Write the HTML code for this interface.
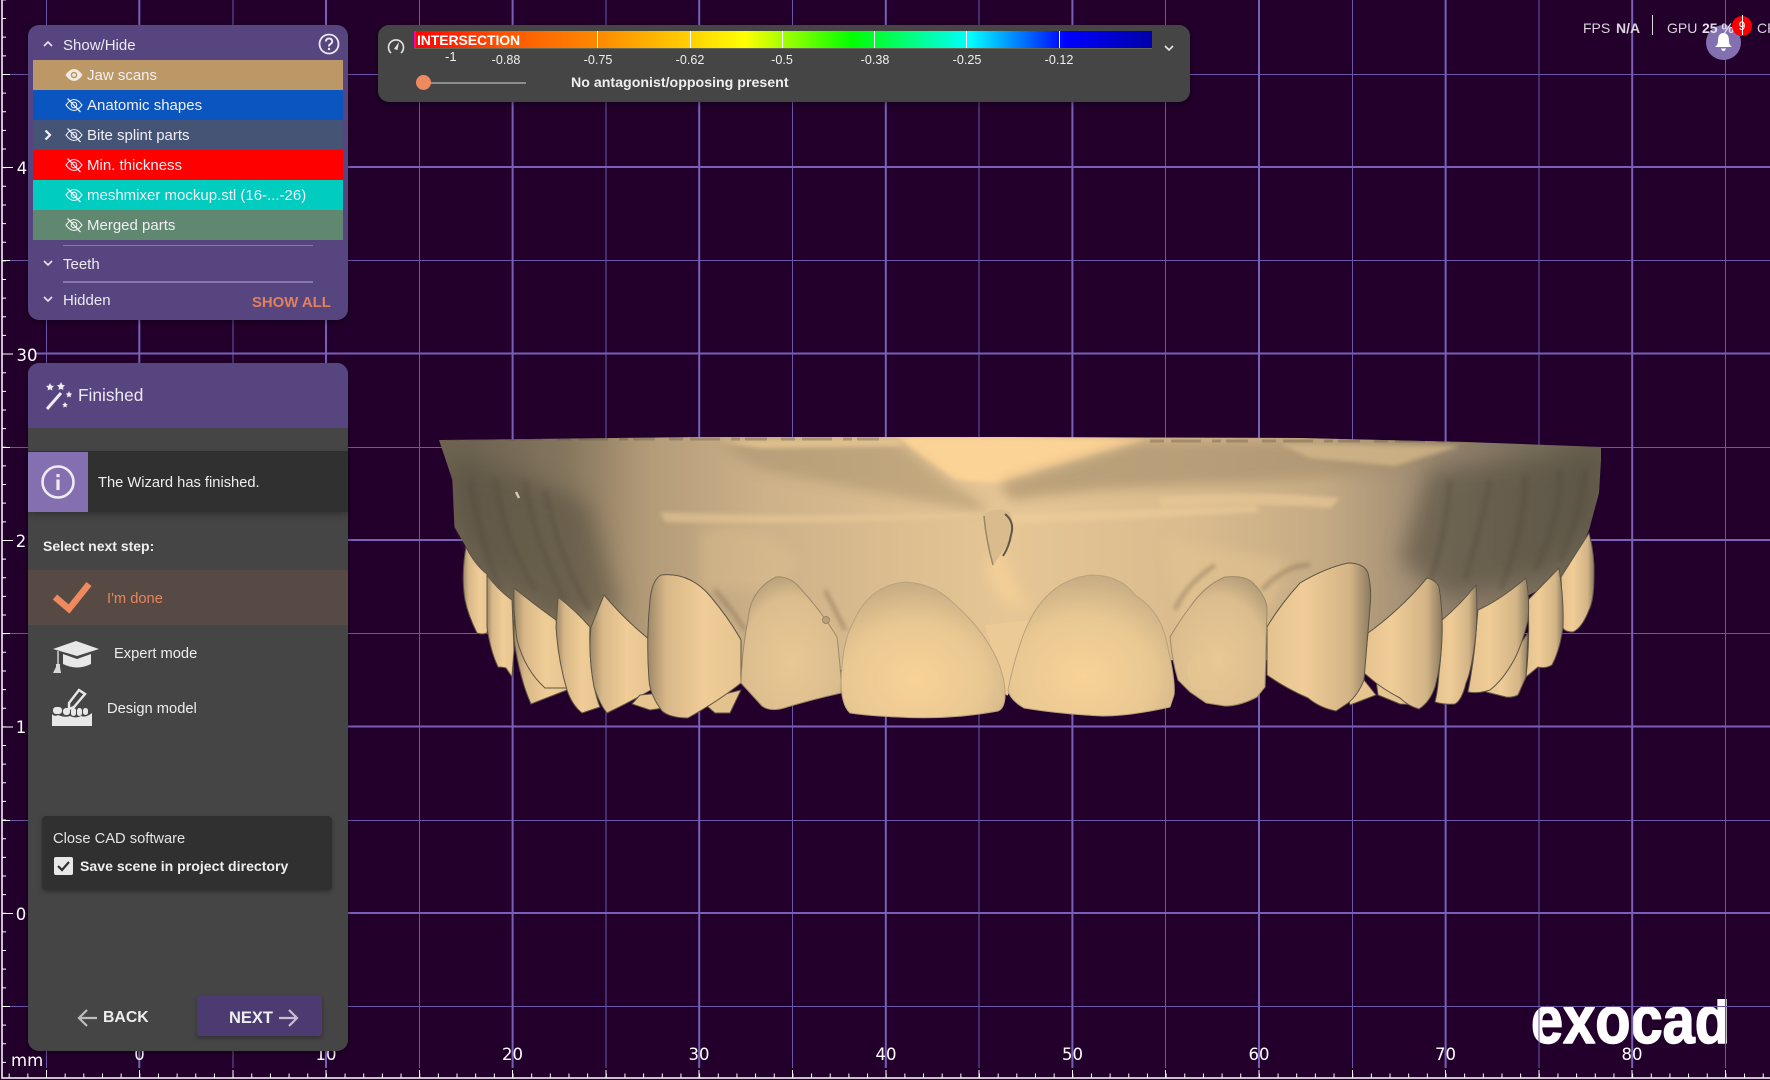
<!DOCTYPE html>
<html><head><meta charset="utf-8"><style>
html,body{margin:0;padding:0;background:#22002b;width:1770px;height:1080px;overflow:hidden}
body{position:relative;font-family:"Liberation Sans",sans-serif;color:#eee}
.a{position:absolute;white-space:nowrap}
.t{position:absolute;white-space:nowrap;line-height:20px;height:20px}
.panel{position:absolute;box-shadow:0 2px 6px rgba(0,0,0,.35)}
.row{position:absolute;left:5px;width:310px;height:30px}
.row span{position:absolute;left:54px;top:1px;line-height:30px;font-size:15px;color:#f1eef4;white-space:nowrap}
.row svg{position:absolute;left:32px;top:6px}
svg{display:block}
</style></head><body>
<svg class="a" style="left:0;top:0" width="1770" height="1080" viewBox="0 0 1770 1080" font-family="'DejaVu Sans',sans-serif">
<defs>
<linearGradient id="gum" gradientUnits="userSpaceOnUse" x1="439" y1="0" x2="1601" y2="0">
<stop offset="0" stop-color="#6e6350"/><stop offset=".03" stop-color="#6f6453"/><stop offset=".11" stop-color="#85765d"/><stop offset=".18" stop-color="#b39b78"/><stop offset=".28" stop-color="#cdb189"/><stop offset=".4" stop-color="#dcbe90"/><stop offset=".49" stop-color="#e6c695"/><stop offset=".65" stop-color="#d9bb8e"/><stop offset=".76" stop-color="#c5ab84"/><stop offset=".86" stop-color="#978670"/><stop offset=".93" stop-color="#7d715e"/><stop offset="1" stop-color="#66604f"/>
</linearGradient>
<linearGradient id="gL" x1="0" y1="0" x2="1" y2="0"><stop offset="0" stop-color="#9d8868"/><stop offset=".2" stop-color="#d8b888"/><stop offset=".6" stop-color="#f0cd97"/><stop offset="1" stop-color="#e6c490"/></linearGradient>
<linearGradient id="gR" x1="1" y1="0" x2="0" y2="0"><stop offset="0" stop-color="#8a7a60"/><stop offset=".2" stop-color="#d3b486"/><stop offset=".65" stop-color="#f0cd97"/><stop offset="1" stop-color="#e4c28f"/></linearGradient>
<radialGradient id="gC" cx=".45" cy=".72" r=".7"><stop offset="0" stop-color="#f8d297"/><stop offset=".6" stop-color="#e9c892"/><stop offset="1" stop-color="#c9ae85"/></radialGradient>
<radialGradient id="gM" cx=".5" cy=".65" r=".7"><stop offset="0" stop-color="#e8c893"/><stop offset=".7" stop-color="#dcbd8e"/><stop offset="1" stop-color="#b39c78"/></radialGradient>
<filter id="b6" x="-30%" y="-30%" width="160%" height="160%"><feGaussianBlur stdDeviation="6"/></filter>
<filter id="b2" x="-30%" y="-30%" width="160%" height="160%"><feGaussianBlur stdDeviation="2"/></filter>
<filter id="b10" x="-30%" y="-30%" width="160%" height="160%"><feGaussianBlur stdDeviation="11"/></filter>
<clipPath id="sil"><path d="M439 440L700 437L1000 437L1300 438L1466 442L1601 447L1601 460L1599 493L1589 530L1570 572L1450 640L1267 660L1176 660L1005 670L841 670L741 665L650 660L500 640L466 560L454 527L452 480Z"/></clipPath>
<clipPath id="logoclip"><rect x="1520" y="999" width="220" height="60"/></clipPath>
</defs>
<!-- logo under grid -->
<text x="1531" y="1043" font-family="'Liberation Sans',sans-serif" font-weight="bold" font-size="67" fill="#fff" stroke="#fff" stroke-width="1.6" stroke-linejoin="round" textLength="199" lengthAdjust="spacingAndGlyphs" clip-path="url(#logoclip)">exocad</text>
<!-- grid -->
<g stroke="#6b57a8" stroke-width="1">
<path d="M46.5 0V1068M233 0V1068M419.5 0V1068M606 0V1068M792.5 0V1068M979 0V1068M1165.5 0V1068M1352.5 0V1068M1539 0V1068M1725.5 0V1068"/>
<path d="M10 74.5H1770M10 260.5H1770M10 447.5H1770M10 633.5H1770M10 820.5H1770M10 1006.5H1770"/>
</g>
<g stroke="#7860b8" stroke-width="2">
<path d="M139.3 0V1068M326 0V1068M512.6 0V1068M699.2 0V1068M885.8 0V1068M1072.4 0V1068M1259 0V1068M1445.6 0V1068M1632.2 0V1068"/>
<path d="M36 167H1770M36 353.5H1770M36 540H1770M36 726.5H1770M36 913H1770"/>
</g>
<!-- ruler -->
<g stroke="#fff" fill="none">
<path d="M2 0V1078H1770" stroke-width="1.5"/>
<line x1="4" y1="0" x2="4" y2="1080" stroke-width="4" stroke-dasharray="1 17.64" stroke-dashoffset="0.6"/>
<line x1="0" y1="1075.5" x2="1770" y2="1075.5" stroke-width="4" stroke-dasharray="1 17.66" stroke-dashoffset="9.98"/>
<path d="M2 74.5H10M2 260.5H10M2 447.5H10M2 633.5H10M2 820.5H10M2 1006.5H10M2 167.5H13M2 354H13M2 540.5H13M2 727H13M2 913.5H13" stroke-width="1"/>
<path d="M46.5 1070V1078M139.5 1070V1078M233 1070V1078M326 1070V1078M419.5 1070V1078M512.5 1070V1078M606 1070V1078M699 1070V1078M792.5 1070V1078M886 1070V1078M979 1070V1078M1072.5 1070V1078M1165.5 1070V1078M1259 1070V1078M1352.5 1070V1078M1445.5 1070V1078M1539 1070V1078M1632 1070V1078M1725.5 1070V1078" stroke-width="1"/>
</g>
<g fill="#fff" font-size="16.5">
<text x="22" y="174" text-anchor="middle">4</text><text x="27" y="361" text-anchor="middle">30</text><text x="21" y="547" text-anchor="middle">2</text><text x="21" y="733" text-anchor="middle">1</text><text x="21" y="920" text-anchor="middle">0</text>
<text x="139.5" y="1060" text-anchor="middle">0</text><text x="326" y="1060" text-anchor="middle">10</text><text x="512.5" y="1060" text-anchor="middle">20</text><text x="699" y="1060" text-anchor="middle">30</text><text x="886" y="1060" text-anchor="middle">40</text><text x="1072.5" y="1060" text-anchor="middle">50</text><text x="1259" y="1060" text-anchor="middle">60</text><text x="1445.5" y="1060" text-anchor="middle">70</text><text x="1632" y="1060" text-anchor="middle">80</text>
<text x="11" y="1066">mm</text>
</g>
<!-- model: gum -->
<path fill="url(#gum)" d="M439 440L700 437L1000 437L1300 438L1466 442L1601 447L1601 460L1599 493L1589 530L1570 572L1450 640L1267 660L1176 660L1005 670L841 670L741 665L650 660L500 640L466 547L454.5 527L452.5 480Z"/>
<g clip-path="url(#sil)">
<path d="M895 437L955 480L1000 483L1050 468L1146 440Z" fill="#fcd396" filter="url(#b2)"/>
<path d="M1000 483L1050 468L1146 440L1466 442L1400 472L1250 482L1100 490L1010 500Z" fill="#a68f6d" opacity=".65" filter="url(#b6)"/>
<path d="M1280 444L1460 446L1395 466L1310 458Z" fill="#d9bb8d" opacity=".7" filter="url(#b2)"/>
<path d="M1160 497Q1250 490 1340 498L1330 508Q1250 502 1160 508Z" fill="#e8c795" opacity=".7" filter="url(#b2)"/>
<path d="M720 445L895 440L945 480L985 505L985 512L860 490L760 470Z" fill="#a08a69" opacity=".45" filter="url(#b6)"/>
<path d="M720 441L895 438L905 446L760 448Z" fill="#e6c692" opacity=".8" filter="url(#b2)"/>
<path d="M660 512Q800 518 980 513L985 516Q800 526 665 522Z" fill="#efcf9c" opacity=".5" filter="url(#b2)"/>
<path d="M1005 515Q1120 510 1255 505L1260 512Q1120 520 1010 524Z" fill="#f0cf9b" opacity=".55" filter="url(#b2)"/>
<path d="M445 460Q500 460 590 505L620 610L560 620L490 575L455 520Z" fill="#57503f" opacity=".55" filter="url(#b10)"/>
<path d="M1430 470L1600 450L1595 520L1550 570L1450 600L1400 560Z" fill="#57503f" opacity=".6" filter="url(#b10)"/>
<path d="M1000 540Q1010 580 1030 610L1000 600L985 570Z" fill="#f8d397" opacity=".7" filter="url(#b6)"/>
<path d="M1165 540L1285 560L1270 610L1180 620Z" fill="#e4c592" opacity=".55" filter="url(#b6)"/>
<path d="M700 530Q760 520 800 560L780 590L700 590Z" fill="#e0c18f" opacity=".4" filter="url(#b6)"/>
<path d="M470 480Q480 540 500 590M495 480Q505 540 535 590M525 480Q530 530 565 600M545 490Q560 560 590 610M1450 480Q1445 540 1430 580M1490 480Q1480 530 1465 580M1525 475Q1525 530 1500 590M1560 470Q1560 520 1535 570M1585 470Q1580 520 1560 560" stroke="#4d4738" stroke-width="5" fill="none" opacity=".28" filter="url(#b2)"/>
<path d="M516 492L519 498" stroke="#f7e3bc" stroke-width="2.5" opacity=".8"/>
<path d="M445 439H890M1150 441H1600" stroke="#544c3c" stroke-width="3" stroke-dasharray="14 7 30 11 9 5 22 14" opacity=".32"/>
<path d="M715 590Q732 610 745 630M1262 590Q1285 565 1310 565M1175 610Q1185 585 1215 565M825 590Q835 610 845 630" stroke="#8a7557" stroke-width="4" fill="none" opacity=".55" filter="url(#b2)"/>
</g>
<!-- frenulum -->
<path d="M983 515Q986 545 993 565Q1002 552 1012 540Q1014 522 1010 512Q996 506 983 515Z" fill="#d9bb8d"/>
<path d="M1005 514Q1015 522 1011 535Q1009 547 1003 556" stroke="#5f5644" stroke-width="2" fill="none"/>
<path d="M984 516Q986 540 993 565" stroke="#9c8668" stroke-width="1.5" fill="none"/>
<!-- teeth -->
<g stroke="#5d5443" stroke-width="1" stroke-linejoin="round">
<path fill="url(#gL)" d="M466 547Q475 565 487 574L491 610L487 633Q482 635 477 633Q468 615 465 600Q461 575 466 547Z"/>
<path fill="url(#gL)" d="M487 575Q498 590 512 600L514 650L512 677L506 668Q502 667 498 667Q490 650 487 627Z"/>
<path fill="url(#gL)" d="M514 640Q520 680 531 704L567 690L570 680L540 668Q522 650 514 620Z"/>
<path fill="url(#gL)" d="M514 588Q535 605 556 620L563 660L567 688L545 688Q525 670 517 640Q513 610 514 588Z"/>
<path fill="url(#gL)" d="M558 597Q575 610 590 627Q589 650 592 673Q595 695 600 707L582 713Q572 705 567 690Q558 660 556 627Z"/>
<path fill="url(#gL)" d="M604 595Q625 620 650 640L651 690Q630 702 607 713Q600 705 594 687Q588 655 591 627Q598 610 604 595Z"/>
<path fill="#e6c591" d="M640 695L660 693L664 708L650 710L632 704Z"/>
<path fill="#e3c28e" d="M741 690L730 713L715 713L700 700Z"/>
<path fill="url(#gR)" d="M1528 633L1526 677L1518 695Q1512 698 1506 697L1486 692Z"/>
<path fill="#e6c591" d="M1364 680L1376 695L1350 705L1348 695Z"/>
<path fill="#e6c591" d="M1376 680L1420 705L1400 704L1378 695Z"/>
<path fill="url(#gR)" d="M1589 533Q1595 555 1594 577Q1594 600 1589 610Q1582 628 1573 632Q1565 632 1563 628L1561 577Z"/>
<path fill="url(#gR)" d="M1559 568Q1564 600 1563 627Q1560 650 1552 665Q1545 669 1538 667L1526 677Q1530 640 1528 600Z"/>
<path fill="url(#gR)" d="M1526 578Q1530 600 1528 620Q1522 645 1514 660Q1503 680 1490 690Q1478 694 1468 692Q1474 660 1476 633Q1477 620 1478 610Q1500 600 1526 578Z"/>
<path fill="url(#gR)" d="M1476 585Q1478 610 1476 633Q1472 670 1466 683Q1462 700 1455 704Q1445 705 1435 702Q1438 690 1439 673Q1442 650 1442 620Q1460 605 1476 585Z"/>
<path fill="url(#gR)" d="M1427 578Q1436 580 1439 587Q1443 610 1442 637Q1441 665 1435 687Q1430 702 1419 709Q1408 706 1400 698Q1385 690 1376 683L1364 673Q1366 650 1368 633Q1400 610 1427 578Z"/>
<path fill="url(#gR)" d="M1348 563Q1364 563 1368 573Q1372 590 1370 607L1364 680Q1358 695 1348 703L1336 711Q1320 708 1308 698Q1285 688 1267 675L1267 627Q1280 605 1300 583Q1325 568 1348 563Z"/>
<path fill="url(#gM)" stroke="#a08a68" d="M1225 577Q1245 575 1253 583Q1265 595 1267 607L1265 687L1257 697Q1240 706 1225 706L1206 703L1190 692L1178 680Q1172 660 1170 637Q1180 620 1190 607Q1205 585 1225 577Z"/>
<path fill="url(#gL)" d="M661 575Q690 572 711 597Q730 620 741 640L741 683Q720 700 688 718Q670 718 662 711Q650 695 649 680Q646 640 650 600Q652 580 661 575Z"/>
<path fill="url(#gM)" stroke="#a08a68" d="M776 577Q790 576 800 588Q822 612 837 637Q842 680 841 693Q810 700 784 708Q770 712 762 706L741 683Q742 650 748 620Q750 590 776 577Z"/>
<path fill="#ecca95" stroke="none" d="M985 625L1030 620L1012 680L1008 695Q1006 697 1004 690Z"/>
<path fill="url(#gC)" stroke="#b9a27d" d="M906 582Q933 584 950 600Q975 622 986 640Q1003 665 1005 690Q1006 708 998 711Q950 720 898 717Q870 716 850 713Q841 705 841 680Q843 640 852 625Q868 585 906 582Z"/>
<path fill="url(#gC)" stroke="#b9a27d" d="M1091 575Q1120 575 1135 595Q1158 610 1165 635Q1176 680 1174 695L1170 707Q1130 716 1103 716Q1060 714 1024 708Q1010 700 1008 690Q1014 660 1024 633Q1045 580 1091 575Z"/>
</g>
<path d="M1195 655Q1205 650 1214 660L1220 690L1195 690Q1180 670 1195 655Z" fill="#e6c693" opacity=".7"/>
<circle cx="826" cy="620" r="3.5" fill="#b8a07c" stroke="#9a8565"/>
</svg>

<!-- Top right stats -->
<div class="a" style="left:1706px;top:25px;width:35px;height:35px;border-radius:50%;background:#8370b0"></div>
<svg class="a" style="left:1714px;top:31px" width="19" height="22" viewBox="0 0 19 22"><path d="M9.5 2C14 2 15 6 15 10Q15 14 18 16H1Q4 14 4 10C4 6 5 2 9.5 2ZM7 17.5H12Q11 20 9.5 20T7 17.5Z" fill="#fff"/></svg>
<div class="t" style="left:1583px;top:18px;font-size:14px;color:#d8d5dc">FPS</div>
<div class="t" style="left:1616px;top:18px;font-size:14px;font-weight:bold;color:#d8d5dc">N/A</div>
<div class="a" style="left:1652px;top:15px;width:1px;height:20px;background:#ddd"></div>
<div class="t" style="left:1667px;top:18px;font-size:14px;color:#d8d5dc">GPU</div>
<div class="t" style="left:1702px;top:18px;font-size:14px;font-weight:bold;color:#e4e1e8">25 %</div>
<div class="t" style="left:1757px;top:18px;font-size:14px;color:#d8d5dc">CPU</div>
<div class="a" style="left:1732px;top:16px;width:20px;height:20px;border-radius:50%;background:#fb0000;color:#fff;font-size:12px;line-height:20px;text-align:center">9</div>
<div class="a" style="left:1742px;top:15px;width:1px;height:20px;background:#fff"></div>

<!-- Show/Hide panel -->
<div class="panel" style="left:28px;top:25px;width:320px;height:295px;border-radius:11px;background:#57457f">
<svg class="a" style="left:15px;top:15px" width="10" height="8" viewBox="0 0 10 8"><path d="M1 6L5 2L9 6" stroke="#e8e4f0" stroke-width="1.6" fill="none"/></svg>
<div class="t" style="left:35px;top:11px;font-size:15px;color:#eceaf1">Show/Hide</div>
<svg class="a" style="left:290px;top:8px" width="22" height="22" viewBox="0 0 22 22"><circle cx="11" cy="11" r="9.5" stroke="#ebe8f2" stroke-width="1.8" fill="none"/><path d="M7.8 8.5Q8 5.5 11 5.5T14.2 8.3Q14.2 10 12.5 11T11 13.5" stroke="#ebe8f2" stroke-width="1.9" fill="none"/><circle cx="11" cy="16" r="1.2" fill="#ebe8f2"/></svg>
<div class="row" style="top:35px;background:#bc9866"><svg width="18" height="18" viewBox="0 0 18 18"><path d="M0.5 9Q4.5 3 9 3T17.5 9Q13.5 15 9 15T0.5 9Z" fill="#f0ece4"/><circle cx="9" cy="9" r="3.3" fill="#bc9866"/><circle cx="9" cy="9" r="1.8" fill="#f0ece4"/></svg><span>Jaw scans</span></div>
<div class="row" style="top:65px;background:#0a55bf"><svg width="18" height="18" viewBox="0 0 18 18" fill="none" stroke="#e6ecf5" stroke-width="1.1"><path d="M1 9Q5 3.5 9 3.5T17 9Q13 14.5 9 14.5T1 9Z"/><circle cx="9" cy="9" r="2.8"/><path d="M2.5 2.5L15.5 16" stroke-width="1.3"/></svg><span>Anatomic shapes</span></div>
<div class="row" style="top:95px;background:#455475"><svg width="18" height="18" viewBox="0 0 18 18" fill="none" stroke="#e6ecf5" stroke-width="1.1"><path d="M1 9Q5 3.5 9 3.5T17 9Q13 14.5 9 14.5T1 9Z"/><circle cx="9" cy="9" r="2.8"/><path d="M2.5 2.5L15.5 16" stroke-width="1.3"/></svg><svg style="left:10px;top:9px" width="10" height="12" viewBox="0 0 10 12"><path d="M2.5 1.5L7 6L2.5 10.5" stroke="#eef" stroke-width="2.2" fill="none"/></svg><span>Bite splint parts</span></div>
<div class="row" style="top:125px;background:#ff0000"><svg width="18" height="18" viewBox="0 0 18 18" fill="none" stroke="#fde" stroke-width="1.1"><path d="M1 9Q5 3.5 9 3.5T17 9Q13 14.5 9 14.5T1 9Z"/><circle cx="9" cy="9" r="2.8"/><path d="M2.5 2.5L15.5 16" stroke-width="1.3"/></svg><span>Min. thickness</span></div>
<div class="row" style="top:155px;background:#00ccc0"><svg width="18" height="18" viewBox="0 0 18 18" fill="none" stroke="#e6fafa" stroke-width="1.1"><path d="M1 9Q5 3.5 9 3.5T17 9Q13 14.5 9 14.5T1 9Z"/><circle cx="9" cy="9" r="2.8"/><path d="M2.5 2.5L15.5 16" stroke-width="1.3"/></svg><span>meshmixer mockup.stl (16-...-26)</span></div>
<div class="row" style="top:185px;background:#60876f"><svg width="18" height="18" viewBox="0 0 18 18" fill="none" stroke="#eaf0ec" stroke-width="1.1"><path d="M1 9Q5 3.5 9 3.5T17 9Q13 14.5 9 14.5T1 9Z"/><circle cx="9" cy="9" r="2.8"/><path d="M2.5 2.5L15.5 16" stroke-width="1.3"/></svg><span>Merged parts</span></div>
<div class="a" style="left:35px;top:220px;width:250px;height:1px;background:#8877aa"></div>
<svg class="a" style="left:15px;top:234px" width="10" height="8" viewBox="0 0 10 8"><path d="M1 2L5 6L9 2" stroke="#e8e4f0" stroke-width="1.6" fill="none"/></svg>
<div class="t" style="left:35px;top:230px;font-size:15px;color:#eceaf1">Teeth</div>
<div class="a" style="left:35px;top:256px;width:250px;height:2px;background:#8877aa"></div>
<svg class="a" style="left:15px;top:270px" width="10" height="8" viewBox="0 0 10 8"><path d="M1 2L5 6L9 2" stroke="#e8e4f0" stroke-width="1.6" fill="none"/></svg>
<div class="t" style="left:35px;top:266px;font-size:15px;color:#eceaf1">Hidden</div>
<div class="t" style="left:224px;top:268px;font-size:14.9px;font-weight:bold;color:#e0815b">SHOW ALL</div>
</div>

<!-- Color scale panel -->
<div class="panel" style="left:378px;top:25px;width:812px;height:77px;border-radius:11px;background:#454545">
<svg class="a" style="left:8px;top:12px" width="20" height="18" viewBox="0 0 20 18"><path d="M5 16A7.5 7.5 0 1 1 15 16" stroke="#e4e4e4" stroke-width="1.6" fill="none"/><path d="M8 12L13 5L11.5 13Z" fill="#e4e4e4"/></svg>
<div class="a" style="left:36px;top:6px;width:738px;height:17px;background:linear-gradient(90deg,#ff0000 0,#ff5500 90px,#ff8800 183px,#ffc400 260px,#ffff00 331px,#00ff00 438px,#00ffff 556px,#0000ff 652px,#0000aa 738px);border-bottom:1px solid #665"></div>
<div class="a" style="left:36px;top:6px;width:2px;height:17px;background:#f0a"></div>
<div class="a" style="left:219px;top:6px;width:1px;height:17px;background:#fff"></div>
<div class="a" style="left:312px;top:6px;width:1px;height:17px;background:#fff"></div>
<div class="a" style="left:404px;top:6px;width:1px;height:17px;background:#fff"></div>
<div class="a" style="left:496px;top:6px;width:1px;height:17px;background:#fff"></div>
<div class="a" style="left:588px;top:6px;width:1px;height:17px;background:#fff"></div>
<div class="a" style="left:681px;top:6px;width:1px;height:17px;background:#fff"></div>
<div class="t" style="left:39px;top:5px;font-size:14px;font-weight:bold;color:#fff;letter-spacing:-.1px">INTERSECTION</div>
<div class="t" style="left:67px;top:22px;font-size:13px;color:#eee">-1</div>
<div class="t" style="left:108px;top:25px;font-size:12.6px;width:40px;text-align:center;color:#eee">-0.88</div>
<div class="t" style="left:200px;top:25px;font-size:12.6px;width:40px;text-align:center;color:#eee">-0.75</div>
<div class="t" style="left:292px;top:25px;font-size:12.6px;width:40px;text-align:center;color:#eee">-0.62</div>
<div class="t" style="left:384px;top:25px;font-size:12.6px;width:40px;text-align:center;color:#eee">-0.5</div>
<div class="t" style="left:477px;top:25px;font-size:12.6px;width:40px;text-align:center;color:#eee">-0.38</div>
<div class="t" style="left:569px;top:25px;font-size:12.6px;width:40px;text-align:center;color:#eee">-0.25</div>
<div class="t" style="left:661px;top:25px;font-size:12.6px;width:40px;text-align:center;color:#eee">-0.12</div>
<div class="a" style="left:46px;top:57px;width:102px;height:2px;background:#8d8d8d"></div>
<div class="a" style="left:38px;top:50px;width:15px;height:15px;border-radius:50%;background:#ee8a60"></div>
<div class="t" style="left:193px;top:48px;font-size:14.2px;font-weight:bold;color:#eee">No antagonist/opposing present</div>
<svg class="a" style="left:786px;top:19px" width="10" height="8" viewBox="0 0 10 8"><path d="M1 2L5 6L9 2" stroke="#e8e8e8" stroke-width="1.6" fill="none"/></svg>
</div>

<!-- Wizard panel -->
<div class="panel" style="left:28px;top:363px;width:320px;height:688px;border-radius:11px;background:#454545">
<div class="a" style="left:0;top:0;width:320px;height:65px;background:#57457f;border-radius:11px 11px 0 0"></div>
<svg class="a" style="left:16px;top:17px" width="30" height="32" viewBox="0 0 30 32"><path d="M3 29L17 13" stroke="#eeebf3" stroke-width="3"/><g fill="#eeebf3"><path d="M6 3L7.2 5.5L10 6L8 8L8.4 10.5L6 9.3L3.6 10.5L4 8L2 6L4.8 5.5Z"/><path d="M17 2L18.3 4.7L21 5.2L19 7.2L19.4 10L17 8.7L14.6 10L15 7.2L13 5.2L15.7 4.7Z"/><path d="M25 11L26 13.2L28.2 13.6L26.6 15.2L27 17.4L25 16.4L23 17.4L23.4 15.2L21.8 13.6L24 13.2Z"/><path d="M21 22L21.9 23.8L23.8 24.2L22.4 25.5L22.7 27.5L21 26.6L19.3 27.5L19.6 25.5L18.2 24.2L20.1 23.8Z"/></g></svg>
<div class="t" style="left:50px;top:17px;height:30px;line-height:30px;font-size:17.3px;color:#ede9f3">Finished</div>
<div class="a" style="left:0;top:88px;width:320px;height:61px;background:#303030;box-shadow:0 3px 6px rgba(0,0,0,.25)"></div>
<div class="a" style="left:0;top:89px;width:60px;height:60px;background:#8470b0"></div>
<svg class="a" style="left:12px;top:101px" width="36" height="36" viewBox="0 0 36 36"><circle cx="18" cy="18" r="15.5" stroke="#eeebf3" stroke-width="2.6" fill="none"/><rect x="16.4" y="15.5" width="3.2" height="10.5" fill="#eeebf3"/><rect x="16.4" y="10" width="3.2" height="3.2" fill="#eeebf3"/></svg>
<div class="t" style="left:70px;top:110px;font-size:14.7px;color:#eee">The Wizard has finished.</div>
<div class="t" style="left:15px;top:173px;font-size:14px;font-weight:bold;color:#eee">Select next step:</div>
<div class="a" style="left:0;top:207px;width:320px;height:55px;background:#574a45"></div>
<svg class="a" style="left:20px;top:212px" width="50" height="44" viewBox="0 0 50 44"><path d="M7 22L21 34L41 9" stroke="#ee8a5e" stroke-width="6.5" fill="none"/></svg>
<div class="t" style="left:79px;top:226px;font-size:14.7px;color:#e8845a">I'm done</div>
<svg class="a" style="left:24px;top:277px" width="48" height="34" viewBox="0 0 48 34"><path d="M24 1L47 9L25 16L1 9Z" fill="#e8e8e8"/><path d="M11 14L25 19L39 14V24Q25 31 11 24Z" fill="#e8e8e8"/><path d="M6 11V24" stroke="#e8e8e8" stroke-width="1.3"/><path d="M4 24H8L8 27L9 33H1L4 27Z" fill="#d8d8d8"/></svg>
<div class="t" style="left:86px;top:281px;font-size:14.7px;color:#eee">Expert mode</div>
<svg class="a" style="left:23px;top:325px" width="42" height="40" viewBox="0 0 42 40"><path d="M28 2L34 6L23 19L18 21L18 15Z" fill="none" stroke="#e8e8e8" stroke-width="2.4"/><path d="M1 38V26Q3 29 7 27Q14 30 19 28Q25 31 30 28Q35 30 41 25V38Z" fill="#e8e8e8"/><rect x="2" y="19" width="9" height="7" rx="3" fill="#e8e8e8"/><rect x="12" y="20" width="7" height="7" rx="3" fill="#e8e8e8"/><rect x="20" y="20" width="5" height="8" rx="2.5" fill="#e8e8e8"/><rect x="26" y="20" width="5" height="8" rx="2.5" fill="#e8e8e8"/><rect x="32" y="20" width="5" height="7" rx="2.5" fill="#e8e8e8"/></svg>
<div class="t" style="left:79px;top:336px;font-size:14.7px;color:#eee">Design model</div>
<div class="a" style="left:14px;top:453px;width:290px;height:74px;border-radius:4px;background:#303030;box-shadow:0 2px 4px rgba(0,0,0,.3)"></div>
<div class="t" style="left:25px;top:466px;font-size:14.7px;color:#e4e4e4">Close CAD software</div>
<div class="a" style="left:26px;top:494px;width:19px;height:18px;border-radius:2px;background:#e8e8e8"></div>
<svg class="a" style="left:26px;top:494px" width="19" height="18" viewBox="0 0 19 18"><path d="M4 9L8 13L15 5" stroke="#303030" stroke-width="2.2" fill="none"/></svg>
<div class="t" style="left:52px;top:493px;font-size:14.1px;font-weight:bold;color:#eee">Save scene in project directory</div>
<svg class="a" style="left:48px;top:645px" width="22" height="20" viewBox="0 0 22 20"><path d="M21 10H3M11 2L3 10L11 18" stroke="#bdbdbd" stroke-width="2.2" fill="none"/></svg>
<div class="t" style="left:75px;top:643px;height:24px;line-height:24px;font-size:15.8px;font-weight:bold;color:#eee">BACK</div>
<div class="a" style="left:169px;top:633px;width:125px;height:40px;border-radius:3px;background:#4b3b70;box-shadow:0 2px 4px rgba(0,0,0,.3)"></div>
<div class="t" style="left:201px;top:643px;height:24px;line-height:24px;font-size:16.5px;font-weight:bold;color:#eee">NEXT</div>
<svg class="a" style="left:250px;top:645px" width="22" height="20" viewBox="0 0 22 20"><path d="M1 10H19M11 2L19 10L11 18" stroke="#c6bfd4" stroke-width="2.2" fill="none"/></svg>
</div>
</body></html>
